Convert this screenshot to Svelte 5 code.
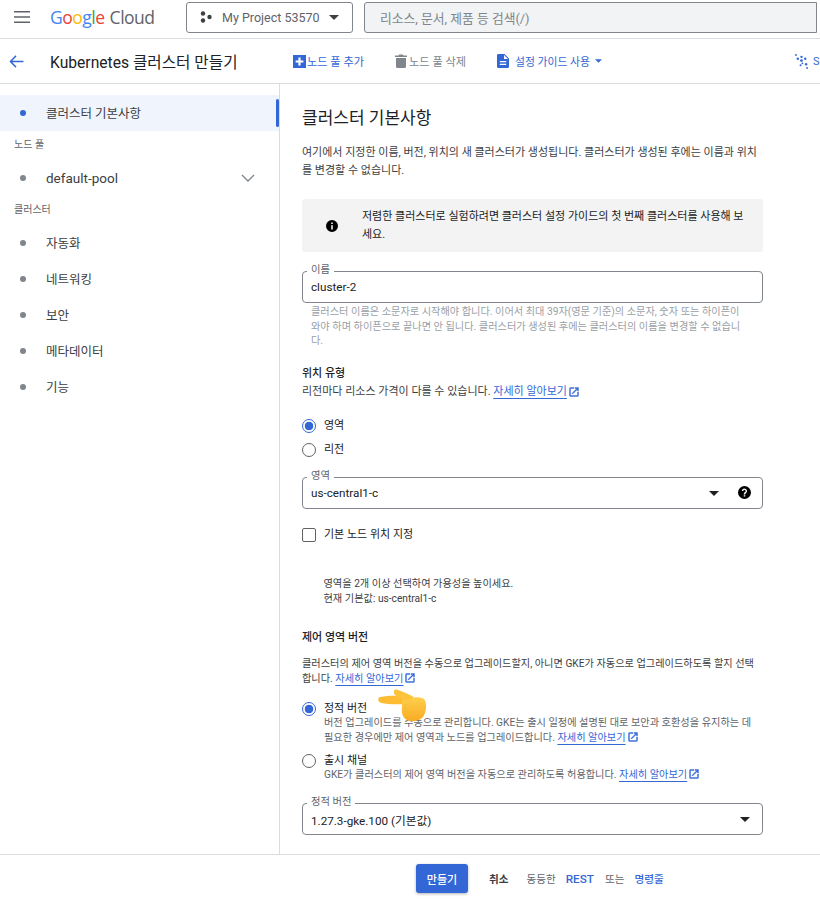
<script>
  const navGroups = [
    { items: [{ label: '클러스터 기본사항', active: true }] },
    { title: '노드 풀', items: [{ label: 'default-pool', chevron: true }] },
    { title: '클러스터', items: [{ label: '자동화' }, { label: '네트워킹' }, { label: '보안' }, { label: '메타데이터' }, { label: '기능' }] }
  ];
</script>

{#snippet extIcon()}
  <svg class="ext" viewBox="0 0 24 24"><path d="M19 19H5V5h7V3H5a2 2 0 0 0-2 2v14a2 2 0 0 0 2 2h14a2 2 0 0 0 2-2v-7h-2v7zM14 3v2h3.600l-9.800 9.800 1.400 1.400L19 6.400V10h2V3h-7z" /></svg>
{/snippet}

{#snippet learnMore()}
  <a class="learn">자세히 알아보기</a>{@render extIcon()}
{/snippet}

{#snippet caret()}
  <svg class="caret" viewBox="0 0 12 6"><path d="M0 0h12L6 6z" /></svg>
{/snippet}

<div class="page">
  <header class="topbar">
    <svg class="menu" viewBox="0 0 16 12"><path d="M0 0h16v1.600H0zM0 5.200h16v1.600H0zM0 10.400h16V12H0z" /></svg>
    <div class="logo">
      <span class="blue">G</span><span class="red">o</span><span class="yellow">o</span><span class="blue">g</span><span class="green">l</span><span class="red">e</span>
      <span class="cloud">Cloud</span>
    </div>
    <button class="project">
      <svg class="dots" viewBox="0 0 12 12"><circle cx="3" cy="2.500" r="2.200" /><circle cx="9.500" cy="6" r="2.200" /><circle cx="3" cy="9.500" r="2.200" /></svg>
      <span>My Project 53570</span>
      <svg class="project-caret" viewBox="0 0 12 6"><path d="M0 0h12L6 6z" /></svg>
    </button>
    <div class="search">리소스, 문서, 제품 등 검색(/)</div>
  </header>

  <div class="toolbar">
    <svg class="back" viewBox="0 0 16 14"><path d="M15.500 6.200H3.400l4.600-4.700L6.900.4.400 7l6.500 6.600L8 12.500 3.400 7.800h12.100z" /></svg>
    <div class="page-title">Kubernetes 클러스터 만들기</div>
    <div class="action add">
      <svg class="add-icon" viewBox="0 0 13 13"><rect width="13" height="13" fill="#3367d6" /><path d="M5.400 2.600h2.200v2.800h2.800v2.200H7.600v2.800H5.400V7.600H2.600V5.400h2.800z" fill="#fff" /></svg>
      노드 풀 추가
    </div>
    <div class="action del">
      <svg class="trash" viewBox="0 0 12 14"><path d="M1 4h10v8.500a1.500 1.500 0 0 1-1.500 1.500h-7A1.500 1.500 0 0 1 1 12.500zM0 1.500h3.500L4.300.5h3.400l.8 1H12V3H0z" /></svg>
      노드 풀 삭제
    </div>
    <div class="action guide">
      <svg class="doc" viewBox="0 0 12 14"><path fill-rule="evenodd" d="M1.300 0H7.500L12 4.500v8.200a1.300 1.300 0 0 1-1.300 1.300H1.300A1.300 1.300 0 0 1 0 12.700V1.300A1.300 1.300 0 0 1 1.300 0zM7 1v4h4zM2.800 7v1.200h6.400V7zM2.800 9.800V11h6.400V9.800z" /></svg>
      <span>설정 가이드 사용</span>
      <svg class="guide-caret" viewBox="0 0 8 4"><path d="M0 0h8L4 4z" /></svg>
    </div>
    <div class="spark">
      <svg viewBox="0 0 14 16">
        <circle cx="1" cy="1" r="1" /><circle cx="3" cy="5" r="1.300" /><circle cx="7" cy="3" r="1.300" /><circle cx="7" cy="7" r="1.500" /><circle cx="11" cy="5" r="1.300" /><circle cx="6" cy="12" r="1.100" /><circle cx="12" cy="11" r="1.300" /><circle cx="13" cy="15" r="1" /><circle cx="8" cy="10" r="1" />
      </svg>
      <span>S</span>
    </div>
  </div>

  <div class="body">
    <nav class="sidebar">
      {#each navGroups as group}
        {#if group.title}
          <div class="nav-title">{group.title}</div>
        {/if}
        {#each group.items as item}
          <div class="nav-item" class:active={item.active}>
            <span class="bullet"></span>
            <span class="nav-label" class:latin={item.chevron}>{item.label}</span>
            {#if item.chevron}
              <svg class="chevron" viewBox="0 0 14 8"><path d="M1 1l6 6 6-6" /></svg>
            {/if}
          </div>
        {/each}
      {/each}
    </nav>

    <main class="content">
      <h1>클러스터 기본사항</h1>
      <p class="intro">여기에서 지정한 이름, 버전, 위치의 새 클러스터가 생성됩니다. 클러스터가 생성된 후에는 이름과 위치를 변경할 수 없습니다.</p>

      <div class="info">
        <svg class="info-icon" viewBox="0 0 12 12"><path fill-rule="evenodd" d="M6 0a6 6 0 1 1 0 12A6 6 0 0 1 6 0zM5.200 2.500v1.600h1.600V2.500zM5.200 5.200v4.300h1.600V5.200z" /></svg>
        <div>저렴한 클러스터로 실험하려면 클러스터 설정 가이드의 첫 번째 클러스터를 사용해 보세요.</div>
      </div>

      <div class="field name-field">
        <span class="field-label">이름</span>
        <span class="field-value">cluster-2</span>
      </div>
      <p class="hint">클러스터 이름은 소문자로 시작해야 합니다. 이어서 최대 39자(영문 기준)의 소문자, 숫자 또는 하이픈이 와야 하며 하이픈으로 끝나면 안 됩니다. 클러스터가 생성된 후에는 클러스터의 이름을 변경할 수 없습니다.</p>

      <h2 class="loc-title">위치 유형</h2>
      <p class="line">리전마다 리소스 가격이 다를 수 있습니다. {@render learnMore()}</p>

      <div class="radio-row first-radio">
        <span class="radio on"></span><span class="radio-text">영역</span>
      </div>
      <div class="radio-row">
        <span class="radio"></span><span class="radio-text">리전</span>
      </div>

      <div class="field zone-field">
        <span class="field-label">영역</span>
        <span class="field-value">us-central1-c</span>
        {@render caret()}
        <svg class="help" viewBox="0 0 12 12"><path fill-rule="evenodd" d="M6 0a6 6 0 1 1 0 12A6 6 0 0 1 6 0zM5.300 8.500v1.300h1.400V8.500zM6 2.200A2.400 2.400 0 0 0 3.600 4.600h1.300A1.100 1.100 0 1 1 6.800 5.400c-.9.800-1.500 1.200-1.500 2.400h1.400c0-.8.400-1.100 1-1.600A2.400 2.400 0 0 0 6 2.200z" /></svg>
      </div>

      <div class="check-row">
        <span class="checkbox"></span><span class="radio-text">기본 노드 위치 지정</span>
      </div>

      <div class="zone-note">
        <div>영역을 2개 이상 선택하여 가용성을 높이세요.</div>
        <div>현재 기본값: us-central1-c</div>
      </div>

      <h2 class="ctl-title">제어 영역 버전</h2>
      <p class="ctl-text">클러스터의 제어 영역 버전을 수동으로 업그레이드할지, 아니면 GKE가 자동으로 업그레이드하도록 할지 선택합니다. {@render learnMore()}</p>

      <div class="version-row static-row">
        <span class="radio on"></span>
        <div>
          <div class="radio-text">정적 버전</div>
          <div class="version-desc">버전 업그레이드를 수동으로 관리합니다. GKE는 출시 일정에 설명된 대로 보안과 호환성을 유지하는 데 필요한 경우에만 제어 영역과 노드를 업그레이드합니다. {@render learnMore()}</div>
        </div>
      </div>
      <div class="version-row channel-row">
        <span class="radio"></span>
        <div>
          <div class="radio-text">출시 채널</div>
          <div class="version-desc">GKE가 클러스터의 제어 영역 버전을 자동으로 관리하도록 허용합니다. {@render learnMore()}</div>
        </div>
      </div>

      <div class="field version-field">
        <span class="field-label">정적 버전</span>
        <span class="field-value">1.27.3-gke.100 (기본값)</span>
        {@render caret()}
      </div>

      <!-- pointing hand over the text -->
      <svg class="hand" viewBox="0 0 50 33">
        <defs>
          <linearGradient id="skin" x1="0" y1="0" x2="0" y2="1">
            <stop offset="0" stop-color="#ffcf4d" />
            <stop offset="1" stop-color="#f8ab22" />
          </linearGradient>
        </defs>
        <path fill="#fdbc33" d="M2 8C9 6.500 18 6.500 28 7v8c-8 .5-18 .5-25-1C-.5 13-.5 8.700 2 8z" />
        <path fill="url(#skin)" d="M24 11c6-3 18-4 22-1 3 3 3 12-1 18-3 4-11 5.500-16 3-4-2-6-7-5-13z" />
        <path fill="#fdc33a" d="M16.500 1C18 0 20 .8 23 2c5 2 9 4 13 6l-8 4c-4-2-10-4.500-11.500-6.500-1-1.500-1-3.500 0-4.500z" />
        <path fill="none" stroke="#f7ae2a" stroke-width=".6" d="M28 15c-1 2-1 3 0 5" />
      </svg>
    </main>
  </div>

  <footer class="footer">
    <button class="create">만들기</button>
    <span class="cancel">취소</span>
    <span class="equiv">동등한</span>
    <span class="foot-link rest">REST</span>
    <span class="equiv or">또는</span>
    <span class="foot-link">명령줄</span>
  </footer>
</div>

<style>
  :global(body) {
    margin: 0;
    background: #fff;
  }
  .page {
    width: 820px;
    height: 902px;
    overflow: hidden;
    display: flex;
    flex-direction: column;
    font-family: Roboto, "Noto Sans CJK KR", sans-serif;
    color: #202124;
    font-size: 11px;
  }
  .topbar {
    height: 39px;
    flex: none;
    display: flex;
    align-items: center;
    padding-bottom: 4px;
    box-sizing: border-box;
    border-bottom: 1px solid #dadce0;
  }
  .menu {
    width: 16px;
    height: 12px;
    margin-left: 14px;
    fill: #5f6368;
    flex: none;
  }
  .logo {
    width: 106px;
    margin-left: 20px;
    font-family: "Open Sans", sans-serif;
    font-size: 17.500px;
    letter-spacing: -0.500px;
    white-space: nowrap;
    flex: none;
  }
  .blue { color: #4285f4; }
  .red { color: #ea4335; }
  .yellow { color: #fbbc04; }
  .green { color: #34a853; }
  .cloud { color: #5f6368; margin-left: 1px; }
  .project {
    width: 167px;
    height: 31px;
    margin-left: 30px;
    flex: none;
    display: flex;
    align-items: center;
    padding: 0;
    background: #fff;
    border: 1px solid #80868b;
    border-radius: 3px;
    font: inherit;
    font-size: 12.500px;
    color: #5f6368;
    box-sizing: border-box;
  }
  .dots {
    width: 12px;
    height: 12px;
    fill: #3c4043;
    margin: 0 10px 0 13px;
  }
  .project-caret {
    width: 10px;
    height: 5px;
    fill: #3c4043;
    margin-left: 9px;
  }
  .search {
    width: 453px;
    height: 31px;
    margin-left: 11px;
    flex: none;
    box-sizing: border-box;
    display: flex;
    align-items: center;
    padding-left: 15px;
    background: #f1f3f4;
    border: 1px solid #80868b;
    border-radius: 3px 0 0 3px;
    font-size: 12.800px;
    color: #80868b;
  }
  .toolbar {
    height: 45px;
    flex: none;
    box-sizing: border-box;
    display: flex;
    align-items: center;
    border-bottom: 1px solid #dadce0;
    position: relative;
  }
  .back {
    width: 15px;
    height: 13px;
    fill: #3367d6;
    margin-left: 9px;
    flex: none;
  }
  .page-title {
    margin-left: 26px;
    width: 243px;
    flex: none;
    font-size: 15.650px;
    color: #202124;
  }
  .action {
    display: flex;
    align-items: center;
    flex: none;
    white-space: nowrap;
    color: #3367d6;
    font-size: 11.200px;
  }
  .add-icon {
    width: 13px;
    height: 13px;
    margin-right: 1px;
  }
  .del {
    margin-left: 31px;
    color: #80868b;
  }
  .trash {
    width: 12px;
    height: 14px;
    margin-right: 2px;
    fill: #80868b;
  }
  .guide {
    margin-left: 31px;
    font-size: 10.800px;
  }
  .doc {
    width: 12px;
    height: 14px;
    fill: #3367d6;
    margin-right: 6px;
  }
  .guide-caret {
    width: 7px;
    height: 4px;
    fill: #3367d6;
    margin-left: 5px;
  }
  .spark {
    margin-left: auto;
    display: flex;
    align-items: center;
    gap: 5px;
    color: #3367d6;
    font-size: 11px;
    width: 25px;
    flex: none;
    overflow: hidden;
  }
  .spark svg {
    width: 13px;
    height: 15px;
    fill: #3367d6;
    flex: none;
  }
  .body {
    flex: 1;
    min-height: 0;
    display: flex;
    overflow: hidden;
  }
  .sidebar {
    width: 280px;
    flex: none;
    box-sizing: border-box;
    padding-top: 11px;
    border-right: 1px solid #dadce0;
  }
  .nav-title {
    height: 29px;
    line-height: 27px;
    padding-left: 14px;
    font-size: 10px;
    color: #5f6368;
  }
  .nav-item {
    height: 36px;
    display: flex;
    align-items: center;
    position: relative;
    font-size: 12.500px;
    color: #3c4043;
    padding-bottom: 1px;
    box-sizing: border-box;
  }
  .nav-item.active {
    background: #eff4fd;
  }
  .nav-item.active::after {
    content: "";
    position: absolute;
    right: 0;
    top: 4px;
    bottom: 4px;
    width: 3px;
    border-radius: 2px;
    background: #3367d6;
  }
  .bullet {
    width: 6px;
    height: 6px;
    border-radius: 50%;
    margin-left: 20px;
    background: #80868b;
    flex: none;
  }
  .active .bullet {
    background: #3367d6;
  }
  .nav-label {
    margin-left: 20px;
  }
  .nav-label.latin {
    font-size: 13.500px;
  }
  .chevron {
    width: 14px;
    height: 8px;
    margin-left: auto;
    margin-right: 24px;
    fill: none;
    stroke: #80868b;
    stroke-width: 1.300;
  }
  .content {
    flex: 1;
    min-width: 0;
    box-sizing: border-box;
    padding: 0 57px 0 22px;
    position: relative;
  }
  h1 {
    margin: 22px 0 0;
    font-size: 17px;
    font-weight: 400;
    line-height: 24px;
    color: #202124;
  }
  h2 {
    margin: 0;
    font-size: 11px;
    font-weight: 500;
    line-height: 16px;
    color: #202124;
  }
  p {
    margin: 0;
  }
  .intro {
    margin-top: 14px;
    line-height: 18px;
    color: #3c4043;
  }
  .info {
    margin-top: 19px;
    height: 53px;
    box-sizing: border-box;
    display: flex;
    align-items: center;
    padding: 0 14px 0 24px;
    background: #f3f3f3;
    border-radius: 3px;
    line-height: 18px;
  }
  .info-icon {
    width: 12px;
    height: 12px;
    flex: none;
    margin-right: 24px;
    fill: #000;
  }
  .field {
    height: 32px;
    box-sizing: border-box;
    display: flex;
    align-items: center;
    position: relative;
    padding-left: 8px;
    border: 1px solid #80868b;
    border-radius: 4px;
    font-size: 11.700px;
    width: 461px;
  }
  .field-label {
    position: absolute;
    top: -8px;
    left: 4px;
    padding: 0 4px;
    background: #fff;
    font-size: 10.300px;
    line-height: 12px;
    color: #5f6368;
  }
  .name-field { margin-top: 19px; }
  .hint {
    margin-top: 2px;
    padding-left: 9px;
    width: 432px;
    font-size: 10.200px;
    line-height: 14.700px;
    color: #9aa0a6;
  }
  .loc-title { margin-top: 17px; }
  .line {
    line-height: 20px;
    color: #3c4043;
  }
  .learn {
    color: #3367d6;
    text-decoration: underline;
    text-underline-offset: 3px;
    text-decoration-thickness: 1px;
  }
  .ext {
    width: 12px;
    height: 12px;
    margin-left: 1px;
    fill: #3367d6;
    stroke: #3367d6;
    stroke-width: 0.800;
    vertical-align: -2.500px;
  }
  .radio-row {
    display: flex;
    align-items: center;
    height: 24px;
  }
  .first-radio { margin-top: 12px; }
  .radio {
    width: 14px;
    height: 14px;
    box-sizing: border-box;
    border: 1px solid #5f6368;
    border-radius: 50%;
    flex: none;
    margin-right: 8px;
    background: #fff;
  }
  .radio.on {
    border-color: #3367d6;
    background: radial-gradient(circle, #3367d6 0 4px, #fff 4.600px);
  }
  .radio-text {
    font-size: 11px;
    line-height: 16px;
    color: #202124;
  }
  .zone-field { margin-top: 15px; }
  .caret {
    width: 10px;
    height: 5px;
    fill: #202124;
    position: absolute;
    right: 43px;
    top: 13px;
  }
  .help {
    position: absolute;
    right: 11px;
    top: 8px;
    width: 13px;
    height: 13px;
    fill: #000;
  }
  .check-row {
    display: flex;
    align-items: center;
    margin-top: 18px;
    height: 16px;
  }
  .checkbox {
    width: 14px;
    height: 14px;
    box-sizing: border-box;
    border: 1px solid #5f6368;
    border-radius: 2px;
    margin-right: 8px;
  }
  .zone-note {
    margin-top: 33px;
    padding-left: 21.500px;
    font-size: 10.200px;
    line-height: 15px;
    color: #3c4043;
  }
  .ctl-title { margin-top: 24px; }
  .ctl-text {
    margin-top: 11px;
    font-size: 10.200px;
    line-height: 14.500px;
    color: #3c4043;
  }
  .version-row {
    display: flex;
    align-items: flex-start;
  }
  .version-row .radio { margin-top: 1px; }
  .version-row .radio-text { line-height: 15px; }
  .static-row { margin-top: 15px; }
  .channel-row { margin-top: 7px; }
  .version-desc {
    width: 432px;
    font-size: 10.200px;
    line-height: 14.700px;
    color: #5f6368;
  }
  .version-field {
    margin-top: 21px;
  }
  .version-field .caret { right: 12px; }
  .hand {
    position: absolute;
    left: 98px;
    top: 605px;
    width: 50px;
    height: 33px;
  }
  .footer {
    height: 48px;
    flex: none;
    box-sizing: border-box;
    display: flex;
    align-items: center;
    padding-left: 416px;
    border-top: 1px solid #dadce0;
    background: #fff;
    font-size: 10.600px;
  }
  .create {
    width: 52px;
    height: 29px;
    padding: 0;
    border: 0;
    border-radius: 3px;
    background: #3367d6;
    color: #fff;
    font: inherit;
    font-size: 11px;
    font-weight: 500;
    box-shadow: 0 1px 3px rgba(60, 64, 67, 0.4);
  }
  .cancel {
    margin-left: 21px;
    font-weight: 700;
    color: #3c4043;
  }
  .equiv {
    margin-left: 18px;
    color: #5f6368;
  }
  .equiv.or { margin-left: 11px; }
  .foot-link {
    margin-left: 10px;
    color: #3367d6;
    font-weight: 500;
  }
  .rest {
    font-size: 11.700px;
  }
</style>
